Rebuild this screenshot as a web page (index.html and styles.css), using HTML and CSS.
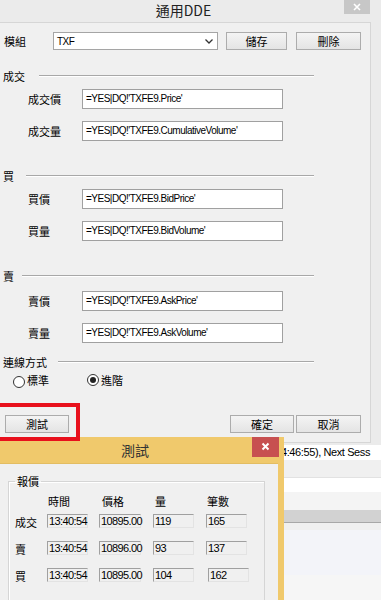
FILE: index.html
```html
<!DOCTYPE html>
<html>
<head>
<meta name="viewport" content="width=device-width, initial-scale=1">
<link rel="stylesheet" href="styles.css">
</head>
<body>
<div class="screen">

  <!-- main dialog -->
  <div class="main">
    <div class="main-title">通用DDE
      <span class="main-close">
        <svg width="26" height="14" viewBox="0 0 26 14"><path d="M10 4 L16 10 M16 4 L10 10" stroke="#fff" stroke-width="1.6"/></svg>
      </span>
    </div>
    <div class="client">
      <div class="top-row">
        <span class="lbl">模組</span>
        <div class="select">TXF
          <svg width="8" height="5" viewBox="0 0 8 5"><path d="M0.5 0.5 L4 4 L7.5 0.5" fill="none" stroke="#333" stroke-width="1.3"/></svg>
        </div>
        <button class="btn save">儲存</button>
        <button class="btn del">刪除</button>
      </div>

      <div class="group g-deal">
        <div class="head"><span>成交</span><i class="rule"></i></div>
        <div class="field"><span class="flabel">成交價</span><div class="input">=YES|DQ!'TXFE9.Price'</div></div>
        <div class="field second"><span class="flabel">成交量</span><div class="input">=YES|DQ!'TXFE9.CumulativeVolume'</div></div>
      </div>

      <div class="group g-bid">
        <div class="head"><span>買</span><i class="rule"></i></div>
        <div class="field"><span class="flabel">買價</span><div class="input">=YES|DQ!'TXFE9.BidPrice'</div></div>
        <div class="field second"><span class="flabel">買量</span><div class="input">=YES|DQ!'TXFE9.BidVolume'</div></div>
      </div>

      <div class="group g-ask">
        <div class="head"><span>賣</span><i class="rule"></i></div>
        <div class="field"><span class="flabel">賣價</span><div class="input">=YES|DQ!'TXFE9.AskPrice'</div></div>
        <div class="field second"><span class="flabel">賣量</span><div class="input">=YES|DQ!'TXFE9.AskVolume'</div></div>
      </div>

      <div class="group g-conn">
        <div class="head"><span>連線方式</span><i class="rule"></i></div>
        <div class="radios">
          <span class="radio r-std"><i class="dot"></i>標準</span>
          <span class="radio r-adv checked"><i class="dot"></i>進階</span>
        </div>
      </div>

      <div class="bottom-row">
        <button class="btn test-btn">測試</button>
        <span class="spacer"></span>
        <button class="btn ok">確定</button>
        <button class="btn cancel">取消</button>
      </div>
    </div>
  </div>

  <!-- window behind the test dialog -->
  <div class="bgapp">
    <div class="strip s-text">4:46:55), Next Sess</div>
    <div class="strip s-light"></div>
    <div class="strip s-white"></div>
    <div class="strip s-pale"></div>
    <div class="strip s-bar"></div>
    <div class="strip s-light2"></div>
    <div class="strip s-blue"></div>
    <div class="strip s-rest"></div>
  </div>

  <!-- test dialog -->
  <div class="test">
    <div class="test-title">測試
      <span class="test-close">
        <svg width="27" height="20" viewBox="0 0 27 20"><path d="M10.5 6.5 L16.5 12.5 M16.5 6.5 L10.5 12.5" stroke="#fff" stroke-width="2"/></svg>
      </span>
    </div>
    <div class="test-client">
      <fieldset class="quote">
        <legend>報價</legend>
        <div class="qrow qhead">
          <span class="qlbl"></span>
          <span class="c1">時間</span>
          <span class="c2">價格</span>
          <span class="c3">量</span>
          <span class="c4">筆數</span>
        </div>
        <div class="qrow first">
          <span class="qlbl">成交</span>
          <span class="c1"><b class="box">13:40:54</b></span>
          <span class="c2"><b class="box wide">10895.00</b></span>
          <span class="c3"><b class="box">119</b></span>
          <span class="c4"><b class="box">165</b></span>
        </div>
        <div class="qrow">
          <span class="qlbl">賣</span>
          <span class="c1"><b class="box">13:40:54</b></span>
          <span class="c2"><b class="box wide">10896.00</b></span>
          <span class="c3"><b class="box">93</b></span>
          <span class="c4"><b class="box">137</b></span>
        </div>
        <div class="qrow">
          <span class="qlbl">買</span>
          <span class="c1"><b class="box">13:40:54</b></span>
          <span class="c2"><b class="box wide">10895.00</b></span>
          <span class="c3"><b class="box">104</b></span>
          <span class="c4"><b class="box shift">162</b></span>
        </div>
      </fieldset>
    </div>
  </div>

  <!-- red highlight drawn over the screenshot -->
  <div class="mark"></div>
</div>
</body>
</html>
```

FILE: styles.css
```css
body {
  margin: 0;
  font-family: "Noto Sans CJK TC", sans-serif;
  font-size: 11px;
  color: #000;
}

.screen {
  position: relative;
  width: 381px;
  height: 600px;
  overflow: hidden;
  background: #f0f0f0;
}

/* Main dialog */
.main {
  height: 445px;
  background: #ebebeb;
}

.main-title {
  position: relative;
  height: 22px;
  line-height: 20px;
  padding-right: 14px;
  text-align: center;
  font-size: 14px;
  color: #222;
}

.main-close {
  position: absolute;
  top: 0;
  right: 11px;
  width: 26px;
  height: 14px;
  background: #c7c7c7;
}

.main-close svg, .test-close svg {
  display: block;
}

.client {
  box-sizing: border-box;
  height: 421px;
  margin-right: 10px;
  padding-top: 9px;
  background: #f0f0f0;
  border: 1px solid #d6d6d6;
  border-left: none;
}

.top-row {
  display: flex;
  align-items: center;
  height: 18px;
  padding-left: 4px;
}

.lbl {
  width: 49px;
}

.select {
  box-sizing: border-box;
  display: flex;
  align-items: center;
  justify-content: space-between;
  width: 165px;
  height: 18px;
  padding: 0 4px 0 3px;
  background: #fff;
  border: 1px solid #a5a5a5;
  font-family: "Liberation Sans", sans-serif;
  font-size: 10px;
  letter-spacing: -0.5px;
}

.btn {
  box-sizing: border-box;
  height: 18px;
  padding: 0;
  background: linear-gradient(#f4f4f4, #e4e4e4);
  border: 1px solid #acacac;
  font-family: "Noto Sans CJK TC", sans-serif;
  font-size: 11px;
  line-height: 15px;
  color: #000;
}

.save {
  width: 61px;
  margin-left: 8px;
}

.del {
  width: 65px;
  margin-left: 9px;
}

/* Group headings with etched rule */
.group {
  margin-top: 28px;
}

.g-deal {
  margin-top: 19px;
}

.g-conn {
  margin-top: 12px;
}

.head {
  display: flex;
  align-items: center;
  height: 14px;
  line-height: 14px;
  padding: 0 56px 0 3px;
}

.rule {
  flex: 1;
  height: 0;
  margin-left: 12px;
  border-top: 1px solid #a8a8a8;
  border-bottom: 1px solid #fff;
}

.g-deal .rule { margin-left: 14px; }
.g-ask .rule { margin-left: 8px; }
.g-conn .rule { margin-left: 11px; }

.field {
  display: flex;
  align-items: center;
  height: 20px;
  margin-top: 6px;
  padding-left: 28px;
}

.g-ask .field {
  margin-top: 8px;
}

.field.second, .g-ask .field.second {
  margin-top: 12px;
}

.flabel {
  width: 54px;
}

.input {
  box-sizing: border-box;
  width: 201px;
  height: 20px;
  padding-left: 3px;
  line-height: 18px;
  background: #fff;
  border: 1px solid #a0a0a0;
  font-family: "Liberation Sans", sans-serif;
  font-size: 10px;
  letter-spacing: -0.5px;
  white-space: nowrap;
}

/* Radio buttons */
.radios {
  display: flex;
  align-items: center;
  height: 16px;
  margin-top: 3px;
  padding-left: 13px;
}

.radio {
  display: flex;
  align-items: center;
  font-size: 11px;
}

.r-adv {
  margin-left: 38px;
}

.dot {
  box-sizing: border-box;
  position: relative;
  width: 12px;
  height: 12px;
  margin-right: 2px;
  background: #fff;
  border: 1px solid #333;
  border-radius: 50%;
}

.r-std .dot {
  margin-top: 3px;
}

.checked .dot::after {
  content: "";
  position: absolute;
  left: 2px;
  top: 2px;
  width: 6px;
  height: 6px;
  background: #222;
  border-radius: 50%;
}

.bottom-row {
  display: flex;
  height: 18px;
  margin-top: 27px;
  padding-left: 5px;
}

.test-btn { width: 64px; }
.spacer { flex: 1; }
.ok { width: 64px; margin-right: 2px; }
.cancel { width: 65px; margin-right: 9px; }

/* Window behind */
.bgapp {
  height: 155px;
}

.strip {
  background: #f0f0f0;
}

.s-text {
  height: 15px;
  padding-left: 281px;
  line-height: 15px;
  background: #fff;
  font-family: "Liberation Sans", sans-serif;
  font-size: 11px;
  letter-spacing: -0.4px;
  white-space: nowrap;
}

.s-light { height: 17px; border-bottom: 1px solid #e2e2e2; }
.s-white { height: 14px; background: #fff; }
.s-pale { height: 18px; background: #f4f4f4; }
.s-bar { height: 12px; background: #d2d2d2; border-bottom: 1px solid #a8a8a8; }
.s-light2 { height: 7px; background: #f0f0f0; }
.s-blue { height: 45px; background: #f3f4f9; }
.s-rest { height: 26px; background: #f6f6f6; }

/* Test dialog */
.test {
  position: absolute;
  left: -10px;
  top: 437px;
  width: 294px;
  height: 180px;
  background: #f0c96c;
}

.test-title {
  position: relative;
  height: 26px;
  line-height: 26px;
  padding-right: 4px;
  text-align: center;
  font-size: 14px;
  color: #333;
}

.test-close {
  position: absolute;
  top: 0;
  right: 5px;
  width: 27px;
  height: 20px;
  background: #c75050;
}

.test-client {
  height: 200px;
  margin: 0 6px 0 8px;
  padding-top: 1px;
  background: #f0f0f0;
  border-top: 1px solid #e3bd62;
}

.quote {
  height: 200px;
  margin: 9px 13px 0 10px;
  padding: 0 0 0 6px;
  border: 1px solid #d5d5d5;
  box-shadow: inset 1px 1px #fff;
}

.quote legend {
  margin-left: 0;
  padding: 0 2px;
  line-height: 14px;
  font-size: 11px;
}

.qrow {
  display: flex;
  align-items: center;
  height: 14px;
  margin-top: 13px;
}

.qhead {
  margin-top: 6px;
}

.qrow.first {
  margin-top: 6px;
}

.qlbl {
  width: 32px;
  padding-top: 2px;
}

.qhead span {
  padding-left: 1px;
  box-sizing: border-box;
}

.qhead .c2 { padding-left: 3px; }
.qhead .c3 { padding-left: 2px; }

.c1 { width: 52px; }
.c2 { width: 54px; }
.c3 { width: 53px; }
.c4 { width: 50px; }

.box {
  box-sizing: border-box;
  display: block;
  width: 41px;
  height: 14px;
  padding-left: 1px;
  line-height: 13px;
  background: #f0f0f0;
  border: 1px solid #e3e3e3;
  border-top-color: #a0a0a0;
  border-left-color: #a0a0a0;
  font-family: "Liberation Sans", sans-serif;
  font-size: 11px;
  font-weight: normal;
  letter-spacing: -0.6px;
  white-space: nowrap;
}

.box.wide { width: 42px; }
.box.shift { margin-left: 2px; }

/* Red annotation box */
.mark {
  position: absolute;
  left: -4px;
  top: 403px;
  width: 84px;
  height: 38px;
  box-sizing: border-box;
  border: 4px solid #e8101c;
}
```
